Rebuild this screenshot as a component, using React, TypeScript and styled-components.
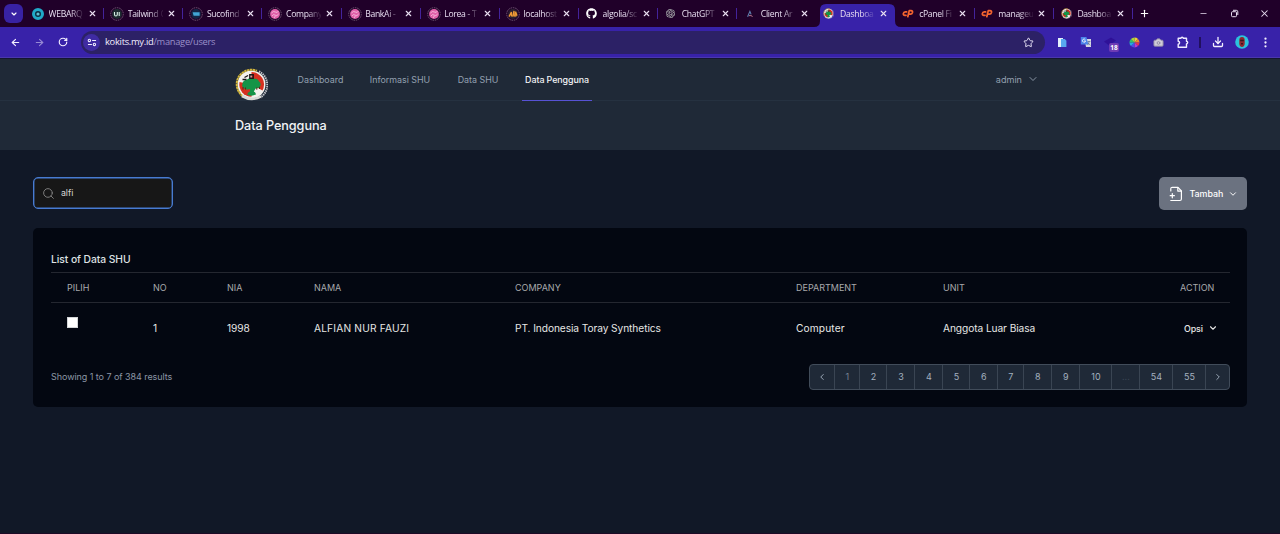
import React from 'react';
import styled, { createGlobalStyle } from 'styled-components';
import { ArrowLeft, ArrowRight, RotateCw, Star, Download, Search, ChevronDown, ChevronLeft, ChevronRight, Plus, X, EllipsisVertical, Minus, Camera } from 'lucide-react';
import { FaGithub } from 'react-icons/fa';
import { SiOpenai } from 'react-icons/si';

const GlobalStyle = createGlobalStyle`
  *, *::before, *::after { box-sizing: border-box; }
  body { margin: 0; background: #111827; font-family: Inter, "Liberation Sans", sans-serif; }
`;

const Screen = styled.div`
  height: 534px;
  display: flex;
  flex-direction: column;
  overflow: hidden;
  background: #111827;
  border-bottom: 1px solid #1d0a26;
`;

/* ---------- browser chrome ---------- */

const TabStrip = styled.div`
  height: 27px;
  flex: none;
  display: flex;
  background: #200029;
  font-family: "Open Sans", "Noto Sans", sans-serif;
`;

const TabSearch = styled.div`
  width: 19px;
  height: 19px;
  margin: 4px 2px 0 4px;
  border-radius: 6px;
  background: #3822a3;
  color: #fff;
  display: grid;
  place-items: center;
`;

const Tab = styled.div<{ $divider?: boolean }>`
  position: relative;
  width: 79.15px;
  height: 27px;
  flex: none;
  display: flex;
  align-items: center;
  padding-left: 6px;
  color: #e9dff2;
  &::after {
    content: '';
    display: ${(p) => (p.$divider ? 'block' : 'none')};
    position: absolute;
    right: 0;
    top: 8px;
    width: 1px;
    height: 11px;
    background: #43239b;
  }
`;

const TabShape = styled.svg`
  position: absolute;
  left: -2px;
  top: 4px;
`;

const TabIcon = styled.span`
  position: relative;
  width: 13px;
  height: 14px;
  display: grid;
  place-items: center;
`;

const TabTitle = styled.span`
  position: relative;
  width: 35px;
  margin-left: 4.6px;
  font-size: 8.6px;
  letter-spacing: -0.3px;
  line-height: 14px;
  white-space: nowrap;
  mask-image: linear-gradient(90deg, #000 60%, rgba(0, 0, 0, 0.15) 95%);
`;

const TabClose = styled.span`
  position: relative;
  width: 8px;
  height: 14px;
  margin-left: 4px;
  display: grid;
  place-items: center;
`;

const NewTab = styled.div`
  width: 23px;
  display: grid;
  place-items: center;
  color: #fff;
`;

const WindowButtons = styled.div`
  margin-left: auto;
  display: flex;
  color: #e9dff2;
`;

const WindowButton = styled.span`
  width: 30.5px;
  display: grid;
  place-items: center;
`;

const Toolbar = styled.div`
  height: 31px;
  flex: none;
  display: flex;
  align-items: center;
  padding-right: 2px;
  background: #3822a9;
  border-bottom: 1px solid #4a38ac;
  box-shadow: 0 1px 0 #141632;
  position: relative;
  color: #f3efff;
  font-family: "Open Sans", "Noto Sans", sans-serif;
`;

const ToolButton = styled.span<{ $dim?: boolean }>`
  position: relative;
  width: 24px;
  height: 24px;
  flex: none;
  display: grid;
  place-items: center;
  opacity: ${(p) => (p.$dim ? 0.5 : 1)};
`;

const NavTools = styled.div`
  display: flex;
  width: 81px;
  padding-left: 3px;
`;

const AddressBar = styled.div`
  width: 964px;
  height: 23px;
  border-radius: 12px;
  background: #2c2166;
  display: flex;
  align-items: center;
  padding: 0 11px 0 2px;
`;

const SiteInfo = styled.span`
  width: 17px;
  height: 17px;
  border-radius: 50%;
  background: #3f2ba2;
  display: grid;
  place-items: center;
`;

const Url = styled.span`
  flex: 1;
  margin-left: 5px;
  font-size: 9.3px;
  letter-spacing: -0.27px;
  line-height: 14px;
  color: #f3efff;
  span { color: #9a90c9; }
`;

const Extensions = styled.div`
  display: flex;
  align-items: center;
  margin-left: 5px;
`;

const CountBadge = styled.span`
  position: absolute;
  left: 11px;
  top: 13px;
  width: 10px;
  height: 9px;
  border-radius: 2px;
  background: #6e3bb4;
  color: #fff;
  font-size: 6.5px;
  font-weight: 700;
  line-height: 9px;
  text-align: center;
`;

const ToolDivider = styled.span`
  width: 1.5px;
  height: 11px;
  margin: 0 5px;
  background: #21105f;
`;

/* ---------- application ---------- */

const NavBar = styled.nav`
  height: 43px;
  flex: none;
  display: flex;
  padding: 0 241px 0 235px;
  background: #1f2937;
  border-bottom: 1px solid #253140;
`;

const Brand = styled.div`
  width: 33px;
  padding-top: 10px;
  margin-right: 27.5px;
`;

const NavLink = styled.a<{ $active?: boolean; $w: number; $ls?: number }>`
  width: ${(p) => p.$w}px;
  height: 43px;
  margin-right: 20.5px;
  padding-top: 14px;
  line-height: 15px;
  text-align: center;
  white-space: nowrap;
  font-size: 8.9px;
  font-weight: ${(p) => (p.$active ? 500 : 400)};
  letter-spacing: ${(p) => p.$ls ?? 0}px;
  color: ${(p) => (p.$active ? '#f3f4f6' : '#93a0b0')};
  border-bottom: 1px solid ${(p) => (p.$active ? '#5752d4' : 'transparent')};
`;

const UserMenu = styled.div`
  margin-left: auto;
  height: 42px;
  display: flex;
  align-items: center;
  gap: 5px;
  font-size: 9.1px;
  color: #93a0b0;
`;

const PageHeader = styled.header`
  height: 49px;
  flex: none;
  padding: 16px 235px 0;
  background: #1f2937;
  h2 {
    margin: 0;
    font-size: 12.7px;
    line-height: 17px;
    font-weight: 550;
    letter-spacing: -0.08px;
    color: #f1f3f6;
  }
`;

const Main = styled.main`
  padding: 27px 32.6px 0 33.4px;
`;

const Actions = styled.div`
  display: flex;
  justify-content: space-between;
  align-items: flex-start;
`;

const SearchBox = styled.div`
  width: 140px;
  height: 32px;
  border: 1.4px solid #477bd2;
  box-shadow: inset 0 0 0 0.4px #477bd2;
  border-radius: 5px;
  background: #171717;
  display: flex;
  align-items: center;
  gap: 6px;
  padding: 0 0 1px 7.5px;
  font-size: 8.8px;
  color: #d6d6d3;
  svg { color: #858585; position: relative; top: 0.5px; }
`;

const AddButton = styled.button`
  width: 88px;
  height: 33px;
  border: 0;
  border-radius: 5px;
  background: #6b7280;
  color: #fff;
  display: flex;
  align-items: center;
  padding: 0 9px 0 9.6px;
  font: 500 8.9px Inter, sans-serif;
  span { flex: 1; margin-left: 6.4px; text-align: left; padding-bottom: 1px; }
`;

const Card = styled.section`
  margin-top: 18px;
  height: 179px;
  padding: 23px 17px 0 17.6px;
  border-radius: 5px;
  background: #030711;
  h3 {
    margin: 0;
    height: 21px;
    font-size: 10.3px;
    line-height: 17px;
    font-weight: 550;
    letter-spacing: -0.06px;
    color: #dfe1e4;
  }
`;

const Table = styled.div`
  display: grid;
  grid-template-columns: 86px 74px 87px 201px 281px 147px 1fr 76px;
`;

const HeadCell = styled.div<{ $right?: boolean }>`
  height: 31px;
  padding: 0 16px;
  line-height: 29px;
  border-top: 1px solid #242730;
  border-bottom: 1px solid #242730;
  font-size: 9px;
  color: #a8a9ac;
  text-align: ${(p) => (p.$right ? 'right' : 'left')};
`;

const Cell = styled.div<{ $ls?: number }>`
  height: 50px;
  padding: 0 0 0 16px;
  line-height: 51px;
  font-size: 10.2px;
  letter-spacing: ${(p) => p.$ls ?? -0.08}px;
  color: #e6e6e5;
  white-space: nowrap;
`;

const Checkbox = styled.span`
  display: block;
  width: 11px;
  height: 11px;
  margin-top: 14px;
  background: #fff;
  border: 1px solid #d3d5d8;
`;

const OptionButton = styled.span`
  height: 50px;
  display: flex;
  align-items: center;
  gap: 5.5px;
  padding-left: 13.5px;
  font-size: 8.9px;
  font-weight: 500;
`;

const Footer = styled.div`
  display: flex;
  justify-content: space-between;
  align-items: center;
  margin-top: 11px;
  font-size: 9px;
  color: #8b96a5;
`;

const Summary = styled.span`
  padding-bottom: 2px;
  letter-spacing: -0.06px;
`;

const Pager = styled.div`
  display: flex;
  height: 26px;
  border: 1px solid #414c5a;
  border-radius: 4px;
  background: #1f2937;
`;

const PageItem = styled.span<{ $w: number; $tone?: string }>`
  width: ${(p) => p.$w}px;
  padding-bottom: 1px;
  display: grid;
  place-items: center;
  color: ${(p) => p.$tone ?? '#a3b0bf'};
  border-right: 1px solid #3a4553;
  &:last-child { border-right: 0; }
`;

/* ---------- drawings ---------- */

const ActiveTabShape = () => (
  <TabShape width="87" height="23" viewBox="0 0 87 23">
    <path d="M0 23q6 0 6-6V6q0-6 6-6h63q6 0 6 6v11q0 6 6 6z" fill="#3822a9" />
  </TabShape>
);

const RingIcon = ({ fill, children }: { fill: string; children?: React.ReactNode }) => (
  <svg width="14" height="14" viewBox="0 0 14 14">
    <circle cx="7" cy="7" r="6.3" fill="none" stroke="#806780" strokeWidth=".8" strokeDasharray="1.6 .8" />
    <circle cx="7" cy="7" r="4.9" fill={fill} />
    {children}
  </svg>
);

const TealIcon = () => (
  <svg width="14" height="14" viewBox="0 0 14 14">
    <circle cx="7" cy="7" r="4.5" fill="#0b2d43" stroke="#20a9c8" strokeWidth="3" />
    <circle cx="7" cy="7" r="1.6" fill="#5fbfd2" />
  </svg>
);

const UiIcon = () => (
  <RingIcon fill="#1d2c30">
    <path d="M4.5 5v2.6q0 1.4 1.4 1.4t1.4-1.4V5M9.2 5v4" fill="none" stroke="#d7f0e6" strokeWidth="1.1" />
  </RingIcon>
);

const BlueIcon = () => (
  <RingIcon fill="#142545">
    <path d="M3.6 5.2h7v3.6h-6z" fill="#42a5d5" />
  </RingIcon>
);

const PinkIcon = () => (
  <RingIcon fill="#e05fa8">
    <path d="M3.4 6q2-2.4 4-1t3-1M4 9q1.6-2.4 3.2-.8T10.6 7M6 11l1.4-2" fill="none" stroke="#f9c6e2" strokeWidth=".8" />
  </RingIcon>
);

const PmaIcon = () => (
  <RingIcon fill="#2b2030">
    <path d="M3 9.600 5.400 5v4.600M6.600 9.600 8 4l.4 5.600M9.800 9.600 9.600 4.600l1.400 4" fill="none" stroke="#ef9a35" strokeWidth="1.300" />
  </RingIcon>
);

const AngularIcon = () => (
  <svg width="10" height="10" viewBox="0 0 10 10">
    <path d="M2.6 7.8 4.9 2.4l1.2 3" fill="none" stroke="#5f7fb0" strokeWidth="1.1" />
    <path d="M4 6.6h2.6L7.4 8" fill="none" stroke="#ad6f86" strokeWidth="1" />
  </svg>
);

const CpanelIcon = () => (
  <svg width="12" height="9" viewBox="0 0 13 10" fill="none" stroke="#f5652f" strokeWidth="1.9" strokeLinecap="round" strokeLinejoin="round">
    <path d="M5 3.3H3.6Q1.6 3.5 1.3 5.2 1.2 7 3 7h1.3" />
    <path d="M6.3 8.6 7.9 1.8h1.9q2 .2 1.7 2-.5 1.9-2.3 1.9h-.7" />
  </svg>
);

const CoopLogo = ({ size }: { size: number }) => (
  <svg width={size} height={size} viewBox="0 0 33 33">
    <circle cx="16.5" cy="16.5" r="14" fill="#f3f2ee" />
    <path d="M16.5 4A12.5 12.5 0 0 1 27.500 22.500L16.500 16.500z" fill="#d5301f" />
    <path d="M4.500 14 16.500 16.500v12.300A12.500 12.500 0 0 1 4.500 14z" fill="#d5301f" />
    <path d="M7.5 28A15 15 0 0 1 3.3 9.5 15 15 0 0 1 22 2.8" fill="none" stroke="#d2b63c" strokeWidth="2" strokeDasharray="2.4 .5" />
    <path d="M24 3.5a15 15 0 0 1 1.5 26" fill="none" stroke="#c3c5ca" strokeWidth="2" strokeDasharray="1.4 .8" />
    <path d="M7 28q9.5 5.5 19 .4" fill="none" stroke="#d9d9d6" strokeWidth="2.6" />
    <path d="M7.500 16q0-3.500 4.200-4.200Q15 9 18.500 10.600q4.500 0 5.500 3 2.600 2 1.200 4.600-1.400 2.400-4.600 2.200l-1.800 3.200q2.400 1 2 3-4 2.200-8.500.2 0-2.400 2.600-3.200v-2.600q-4.600 1.400-6.200-.8Q6.400 18 7.500 16z" fill="#149447" />
    <path d="M7.500 11.500h4M9.500 9.500l3.600-2M14.800 6.800h3.400v3.400h-3.400z" fill="none" stroke="#1c1718" strokeWidth="1.4" />
    <path d="M8 19v2.600M10.500 19.500v2M21.800 19.500v2.200M24.500 18.800V21" stroke="#641e16" strokeWidth="1" />
  </svg>
);

const TuneIcon = () => (
  <svg width="10" height="9" viewBox="0 0 11 10" fill="none" stroke="#f0edff" strokeWidth="1.2">
    <circle cx="2.6" cy="2.7" r="1.3" />
    <path d="M5.6 2.7H10M1 7.2h4.4" />
    <circle cx="8.2" cy="7.2" r="1.3" />
  </svg>
);

const PagesIcon = () => (
  <svg width="10" height="11" viewBox="0 0 10 11">
    <path d="M1 1h5v9H1z" fill="#e4f0fb" />
    <path d="M4 2h3.8l1.6 1.7V10H4z" fill="#57a8f0" />
  </svg>
);

const TranslateIcon = () => (
  <svg width="12" height="12" viewBox="0 0 12 12">
    <path d="M4.5 3H11v8H6z" fill="#d5d9e2" />
    <path d="M.8 1h5.6l2 7.5H.8z" fill="#4c85ea" />
    <path d="M5.4 3.8A1.6 1.6 0 1 0 5.6 5H4" fill="none" stroke="#fff" strokeWidth=".8" />
    <path d="M7.6 5.5h2.8M9 5v.8Q8.8 8 7.6 9M8 7l2.4 2.2" fill="none" stroke="#5a6d93" strokeWidth=".7" />
  </svg>
);

const LayersIcon = () => (
  <svg width="15" height="12" viewBox="0 0 15 12">
    <path d="m1 5.5 7-4 5 3-7 5z" fill="#2f1198" />
  </svg>
);

const wheel = ['#f2d22e', '#ef8a2a', '#e8344a', '#c23ac9', '#4b50e6', '#28a9e0', '#2fc56b', '#a8d838'];
const ColorWheel = () => (
  <svg width="11" height="11" viewBox="-6 -6 12 12">
    {wheel.map((color, i) => (
      <path key={color} d="M0 0 0-5.5A5.5 5.5 0 0 1 3.9-3.9z" fill={color} transform={`rotate(${i * 45})`} />
    ))}
  </svg>
);

const PuzzleIcon = () => (
  <svg width="13" height="13" viewBox="0 0 13 13" fill="none" stroke="#f0edff" strokeWidth="1.4" strokeLinejoin="round">
    <path d="M2.2 2.3h2.6q.3-1.1 1.3-1.1t1.3 1.1h3.100v2.900q1.200.3 1.200 1.400t-1.200 1.400v3.200H2.200V8.300q1.400-.2 1.400-1.500T2.200 5.200z" />
  </svg>
);

const Avatar = () => (
  <svg width="14" height="14" viewBox="0 0 14 14">
    <circle cx="7" cy="7" r="6.8" fill="#2cc3dc" />
    <path d="M4.3 5q0-3 2.7-3t2.7 3v4q-.5 3-2.7 3T4.300 9z" fill="#8f2730" />
    <path d="M5.2 4.8h3.6v1.4H5.2zM6 8h2v1.5H6z" fill="#3a1720" />
  </svg>
);

const RestoreIcon = () => (
  <svg width="9" height="9" viewBox="0 0 9 9" fill="none" stroke="currentColor" strokeWidth="1">
    <rect x="1.5" y="2.7" width="5" height="5" rx="1" />
    <path d="M3 1.3h3.3q1.5 0 1.5 1.5V6" />
  </svg>
);

const FileAddIcon = () => (
  <svg width="14" height="16" viewBox="0 0 14 16" fill="none" stroke="#fff" strokeWidth="1.2" strokeLinecap="round" strokeLinejoin="round">
    <path d="M1.8 5V2.8q0-1.5 1.5-1.5H9L12.4 5v8q0 1.500-1.500 1.500H1.800" />
    <path d="M8.800 1.500v3.600h3.500M3.300 7.600v4.200M1.200 9.700h4.200" />
  </svg>
);

/* ---------- data ---------- */

const tabs: { title: string; icon: React.ReactNode }[] = [
  { title: 'WEBARQ', icon: <TealIcon /> },
  { title: 'Tailwind C', icon: <UiIcon /> },
  { title: 'Sucofind', icon: <BlueIcon /> },
  { title: 'Company', icon: <PinkIcon /> },
  { title: 'BankAi -', icon: <PinkIcon /> },
  { title: 'Lorea - T', icon: <PinkIcon /> },
  { title: 'localhost', icon: <PmaIcon /> },
  { title: 'algolia/sc', icon: <FaGithub size={11} color="#fff" /> },
  { title: 'ChatGPT', icon: <SiOpenai size={9} color="#c5d0c9" /> },
  { title: 'Client Ar', icon: <AngularIcon /> },
  { title: 'Dashboa', icon: <CoopLogo size={11} /> },
  { title: 'cPanel Fi', icon: <CpanelIcon /> },
  { title: 'manageu', icon: <CpanelIcon /> },
  { title: 'Dashboa', icon: <CoopLogo size={11} /> },
];
const activeTab = 10;

const columns = ['PILIH', 'NO', 'NIA', 'NAMA', 'COMPANY', 'DEPARTMENT', 'UNIT', 'ACTION'];
const user: [string, number?][] = [
  ['1'],
  ['1998'],
  ['ALFIAN NUR FAUZI', 0.17],
  ['PT. Indonesia Toray Synthetics', -0.09],
  ['Computer', 0.12],
  ['Anggota Luar Biasa', -0.09],
];

const pages: [React.ReactNode, number, string?][] = [
  [<ChevronLeft size={10} strokeWidth={2.2} />, 25],
  ['1', 25, '#768492'],
  ['2', 27],
  ['3', 28],
  ['4', 28],
  ['5', 27],
  ['6', 28],
  ['7', 26],
  ['8', 28],
  ['9', 28],
  ['10', 32],
  ['...', 28, '#384452'],
  ['54', 33],
  ['55', 33],
  [<ChevronRight size={10} strokeWidth={2.2} />, 23],
];

export default function App() {
  return (
    <Screen>
      <GlobalStyle />
      <TabStrip>
        <TabSearch><ChevronDown size={8} strokeWidth={3.5} /></TabSearch>
        {tabs.map((tab, i) => (
          <Tab key={i} $divider={Math.abs(i - activeTab + 0.5) > 1}>
            {i === activeTab && <ActiveTabShape />}
            <TabIcon>{tab.icon}</TabIcon>
            <TabTitle>{tab.title}</TabTitle>
            <TabClose><X size={9} strokeWidth={3} /></TabClose>
          </Tab>
        ))}
        <NewTab><Plus size={11} strokeWidth={2.5} /></NewTab>
        <WindowButtons>
          <WindowButton><Minus size={9} strokeWidth={2} /></WindowButton>
          <WindowButton><RestoreIcon /></WindowButton>
          <WindowButton><X size={11} strokeWidth={2.2} /></WindowButton>
        </WindowButtons>
      </TabStrip>

      <Toolbar>
        <NavTools>
          <ToolButton><ArrowLeft size={11} strokeWidth={2.4} /></ToolButton>
          <ToolButton $dim><ArrowRight size={11} strokeWidth={2.4} /></ToolButton>
          <ToolButton><RotateCw size={10} strokeWidth={2.8} /></ToolButton>
        </NavTools>
        <AddressBar>
          <SiteInfo><TuneIcon /></SiteInfo>
          <Url>kokits.my.id<span>/manage/users</span></Url>
          <Star size={11} strokeWidth={2} />
        </AddressBar>
        <Extensions>
          <ToolButton><PagesIcon /></ToolButton>
          <ToolButton><TranslateIcon /></ToolButton>
          <ToolButton><LayersIcon /><CountBadge>18</CountBadge></ToolButton>
          <ToolButton><ColorWheel /></ToolButton>
          <ToolButton><Camera size={11} fill="#d0ccd8" color="#8f8aa3" /></ToolButton>
          <ToolButton><PuzzleIcon /></ToolButton>
          <ToolDivider />
          <ToolButton><Download size={12} strokeWidth={2.6} /></ToolButton>
          <ToolButton><Avatar /></ToolButton>
          <ToolButton><EllipsisVertical size={13} strokeWidth={2.2} /></ToolButton>
        </Extensions>
      </Toolbar>

      <NavBar>
        <Brand><CoopLogo size={33} /></Brand>
        <NavLink $w={50}>Dashboard</NavLink>
        <NavLink $w={68}>Informasi SHU</NavLink>
        <NavLink $w={47}>Data SHU</NavLink>
        <NavLink $w={70} $active $ls={-0.08}>Data Pengguna</NavLink>
        <UserMenu>admin <ChevronDown size={12} strokeWidth={1.8} /></UserMenu>
      </NavBar>
      <PageHeader><h2>Data Pengguna</h2></PageHeader>

      <Main>
        <Actions>
          <SearchBox><Search size={13} strokeWidth={1.7} />alfi</SearchBox>
          <AddButton>
            <FileAddIcon />
            <span>Tambah</span>
            <ChevronDown size={10} strokeWidth={2.3} />
          </AddButton>
        </Actions>

        <Card>
          <h3>List of Data SHU</h3>
          <Table>
            {columns.map((c) => <HeadCell key={c} $right={c === 'ACTION'}>{c}</HeadCell>)}
            <Cell><Checkbox /></Cell>
            {user.map(([value, spacing]) => <Cell key={value} $ls={spacing}>{value}</Cell>)}
            <Cell><OptionButton>Opsi <ChevronDown size={10} strokeWidth={2.6} /></OptionButton></Cell>
          </Table>
          <Footer>
            <Summary>Showing 1 to 7 of 384 results</Summary>
            <Pager>
              {pages.map(([label, w, tone], i) => <PageItem key={i} $w={w} $tone={tone}>{label}</PageItem>)}
            </Pager>
          </Footer>
        </Card>
      </Main>
    </Screen>
  );
}
